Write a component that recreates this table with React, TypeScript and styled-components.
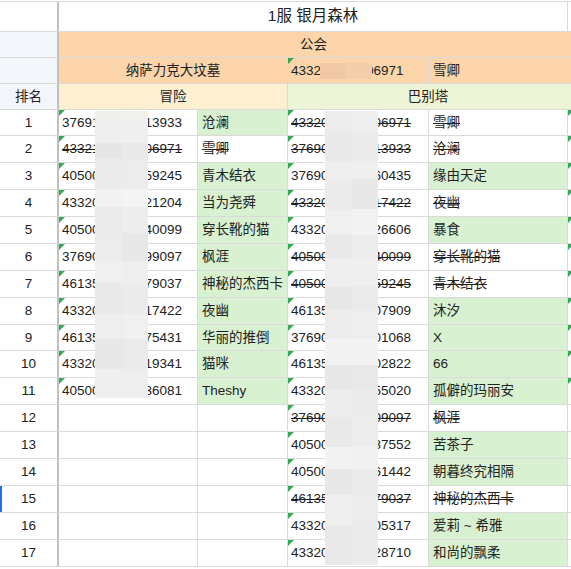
import React from 'react';
import styled, { createGlobalStyle } from 'styled-components';

const Global = createGlobalStyle`
  html, body { margin: 0; padding: 0; background: #fff; }
  body {
    font-family: "Liberation Sans", Arial, "Noto Sans CJK SC", sans-serif;
    color: #222;
    overflow: hidden;
  }
`;

const COLS = '59px 139px 90px 141px 139px 1fr';
const LINE = '#dadada';

const C = {
  orange: '#fcd5aa',
  yellow: '#fdf0d1',
  lime: '#edf5d6',
  green: '#d8f1d1',
  head: '#f3f6fa',
  tri: '#34a853',
};

const Sheet = styled.div`
  position: relative;
  width: 571px;
  height: 568px;
  margin-top: 1px;
  border-top: 1px solid ${LINE};
  overflow: hidden;
`;

const Row = styled.div<{ $h: number }>`
  display: grid;
  grid-template-columns: ${COLS};
  height: ${(p) => p.$h}px;
`;

const Cell = styled.div<{
  $bg?: string;
  $span?: number;
  $center?: boolean;
  $strike?: boolean;
  $thick?: boolean;
  $tri?: boolean;
  $pad?: number;
  $size?: number;
  $sel?: boolean;
  $noRight?: boolean;
}>`
  position: relative;
  box-sizing: border-box;
  min-width: 0;
  grid-column: span ${(p) => p.$span ?? 1};
  background: ${(p) => p.$bg ?? '#fff'};
  border-right: ${(p) =>
    p.$thick ? '2px solid #c0c0c0' : p.$noRight ? 'none' : `1px solid ${LINE}`};
  border-bottom: 1px solid ${LINE};
  display: flex;
  align-items: center;
  justify-content: ${(p) => (p.$center ? 'center' : 'flex-start')};
  padding: 0 ${(p) => p.$pad ?? 4}px;
  font-size: ${(p) => p.$size ?? 13.5}px;
  line-height: 16px;
  white-space: nowrap;
  overflow: hidden;
  color: #222;
  text-decoration: ${(p) => (p.$strike ? 'line-through' : 'none')};
  text-decoration-thickness: 1px;

  &::before {
    content: '';
    display: ${(p) => (p.$tri ? 'block' : 'none')};
    position: absolute;
    left: 0;
    top: 0;
    width: 0;
    height: 0;
    border-top: 6px solid ${C.tri};
    border-right: 6px solid transparent;
  }

  &::after {
    content: '';
    display: ${(p) => (p.$sel ? 'block' : 'none')};
    position: absolute;
    left: 0;
    top: 0;
    bottom: 0;
    width: 2px;
    background: #1a73e8;
  }
`;

const Mosaic = styled.div<{ $x: number; $y: number; $w: number; $h: number }>`
  position: absolute;
  left: ${(p) => p.$x}px;
  top: ${(p) => p.$y}px;
  width: ${(p) => p.$w}px;
  height: ${(p) => p.$h}px;
  overflow: hidden;
  display: flex;
  flex-direction: column;
`;

const Band = styled.div<{ $h: number }>`
  display: flex;
  flex: 0 0 ${(p) => p.$h}px;
`;

const Tile = styled.div<{ $c: string }>`
  flex: 1;
  background: ${(p) => p.$c};
`;

type Entry = [string, string, string, boolean];

const left: Entry[] = [
  ['37691', '13933', '沧澜', false],
  ['43321', '06971', '雪卿', true],
  ['40500', '59245', '青木结衣', false],
  ['43320', '21204', '当为尧舜', false],
  ['40500', '40099', '穿长靴的猫', false],
  ['37690', '99097', '枫涯', false],
  ['46135', '79037', '神秘的杰西卡', false],
  ['43320', '17422', '夜幽', false],
  ['46135', '75431', '华丽的推倒', false],
  ['43320', '19341', '猫咪', false],
  ['40500', '36081', 'Theshy', false],
];

const right: Entry[] = [
  ['43320', '06971', '雪卿', true],
  ['37690', '13933', '沧澜', true],
  ['37690', '60435', '缘由天定', false],
  ['43320', '17422', '夜幽', true],
  ['43320', '26606', '暴食', false],
  ['40500', '40099', '穿长靴的猫', true],
  ['40500', '59245', '青木结衣', true],
  ['46135', '07909', '沐汐', false],
  ['37690', '01068', 'X', false],
  ['46135', '02822', '66', false],
  ['43320', '55020', '孤僻的玛丽安', false],
  ['37690', '09097', '枫涯', true],
  ['40500', '37552', '苦茶子', false],
  ['40500', '61442', '朝暮终究相隔', false],
  ['46135', '79037', '神秘的杰西卡', true],
  ['43320', '05317', '爱莉 ~ 希雅', false],
  ['43320', '28710', '和尚的飘柔', false],
];

const rowHeights = [26, 27, 27, 27, 27, 27, 27, 27, 26, 27, 27, 27, 27, 27, 27, 27, 27];

const id = (a: string, b: string, mid = '888888') => `${a}${mid}${b}`;

type B = [number, string, string];
const leftBands: B[] = [
  [8, '#f1efe9', '#f2f0eb'],
  [24, '#eeeeee', '#efefef'],
  [16, '#e6e6e6', '#e9e9e9'],
  [30, '#ebebeb', '#ececec'],
  [18, '#f2f2f2', '#f4f4f4'],
  [26, '#eaeaea', '#ededed'],
  [28, '#ececec', '#e8e8e8'],
  [22, '#f0f0f0', '#eeeeee'],
  [30, '#e9e9e9', '#ebebeb'],
  [26, '#eeeeee', '#f0f0f0'],
  [30, '#e8e8e8', '#eaeaea'],
  [29, '#efefef', '#eeeeee'],
];
const rightBands: B[] = [
  [22, '#ececec', '#eeeeee'],
  [28, '#e9e9e9', '#ebebeb'],
  [18, '#eeeeee', '#efefef'],
  [30, '#ebebeb', '#e8e8e8'],
  [26, '#f0f0f0', '#f2f2f2'],
  [24, '#e9e9e9', '#ececec'],
  [28, '#eeeeee', '#efefef'],
  [22, '#e7e7e7', '#eaeaea'],
  [30, '#ececec', '#eeeeee'],
  [26, '#f2f2f2', '#f3f3f3'],
  [24, '#e8e8e8', '#e9e9e9'],
  [28, '#ededed', '#ebebeb'],
  [30, '#e9e9e9', '#ececec'],
  [22, '#f3f3f3', '#f1f1f1'],
  [26, '#e8e8e8', '#eaeaea'],
  [30, '#eeeeee', '#ececec'],
  [40, '#e9e9e9', '#ebebeb'],
];
const headBands: B[] = [[16, '#f1c8a6', '#f3cdac']];

const renderBands = (bands: B[]) =>
  bands.map(([h, a, b], i) => (
    <Band key={i} $h={h}>
      <Tile $c={a} />
      <Tile $c={b} />
    </Band>
  ));

export default function App() {
  return (
    <>
      <Global />
      <Sheet>
        <Row $h={30}>
          <Cell $thick />
          <Cell $span={4} $center $size={15.5} style={{ paddingBottom: 2 }}>
            1服 银月森林
          </Cell>
          <Cell $noRight />
        </Row>
        <Row $h={26}>
          <Cell $thick $bg={C.head} />
          <Cell $span={4} $center $bg={C.orange} $noRight>
            公会
          </Cell>
          <Cell $bg={C.orange} $noRight />
        </Row>
        <Row $h={26}>
          <Cell $thick $bg={C.head} />
          <Cell $span={2} $center $bg={C.orange}>
            纳萨力克大坟墓
          </Cell>
          <Cell $bg={C.orange} $tri $pad={3}>
            {id('43320', '06971', '88888')}
          </Cell>
          <Cell $bg={C.orange} $noRight>
            雪卿
          </Cell>
          <Cell $bg={C.orange} $noRight />
        </Row>
        <Row $h={26}>
          <Cell $thick $bg={C.head} $center>
            排名
          </Cell>
          <Cell $span={2} $center $bg={C.yellow}>
            冒险
          </Cell>
          <Cell $span={2} $center $bg={C.lime} $noRight>
            巴别塔
          </Cell>
          <Cell $bg={C.lime} $noRight />
        </Row>
        {rowHeights.map((h, i) => {
          const l = left[i];
          const r = right[i];
          return (
            <Row key={i} $h={h}>
              <Cell $thick $center $sel={i === 14}>
                {i + 1}
              </Cell>
              <Cell $tri={!!l} $pad={3} $strike={l?.[3]}>
                {l ? id(l[0], l[1]) : ''}
              </Cell>
              <Cell $bg={l && !l[3] ? C.green : '#fff'} $strike={l?.[3]}>
                {l ? l[2] : ''}
              </Cell>
              <Cell $tri $pad={3} $strike={r[3]}>
                {id(r[0], r[1])}
              </Cell>
              <Cell $bg={r[3] ? '#fff' : C.green} $strike={r[3]}>
                {r[2]}
              </Cell>
              <Cell $tri={i < 11} $noRight />
            </Row>
          );
        })}

        <Mosaic $x={320} $y={61} $w={52} $h={16}>
          {renderBands(headBands)}
        </Mosaic>
        <Mosaic $x={95} $y={109} $w={53} $h={288}>
          {renderBands(leftBands)}
        </Mosaic>
        <Mosaic $x={325} $y={109} $w={53} $h={460}>
          {renderBands(rightBands)}
        </Mosaic>
      </Sheet>
    </>
  );
}
